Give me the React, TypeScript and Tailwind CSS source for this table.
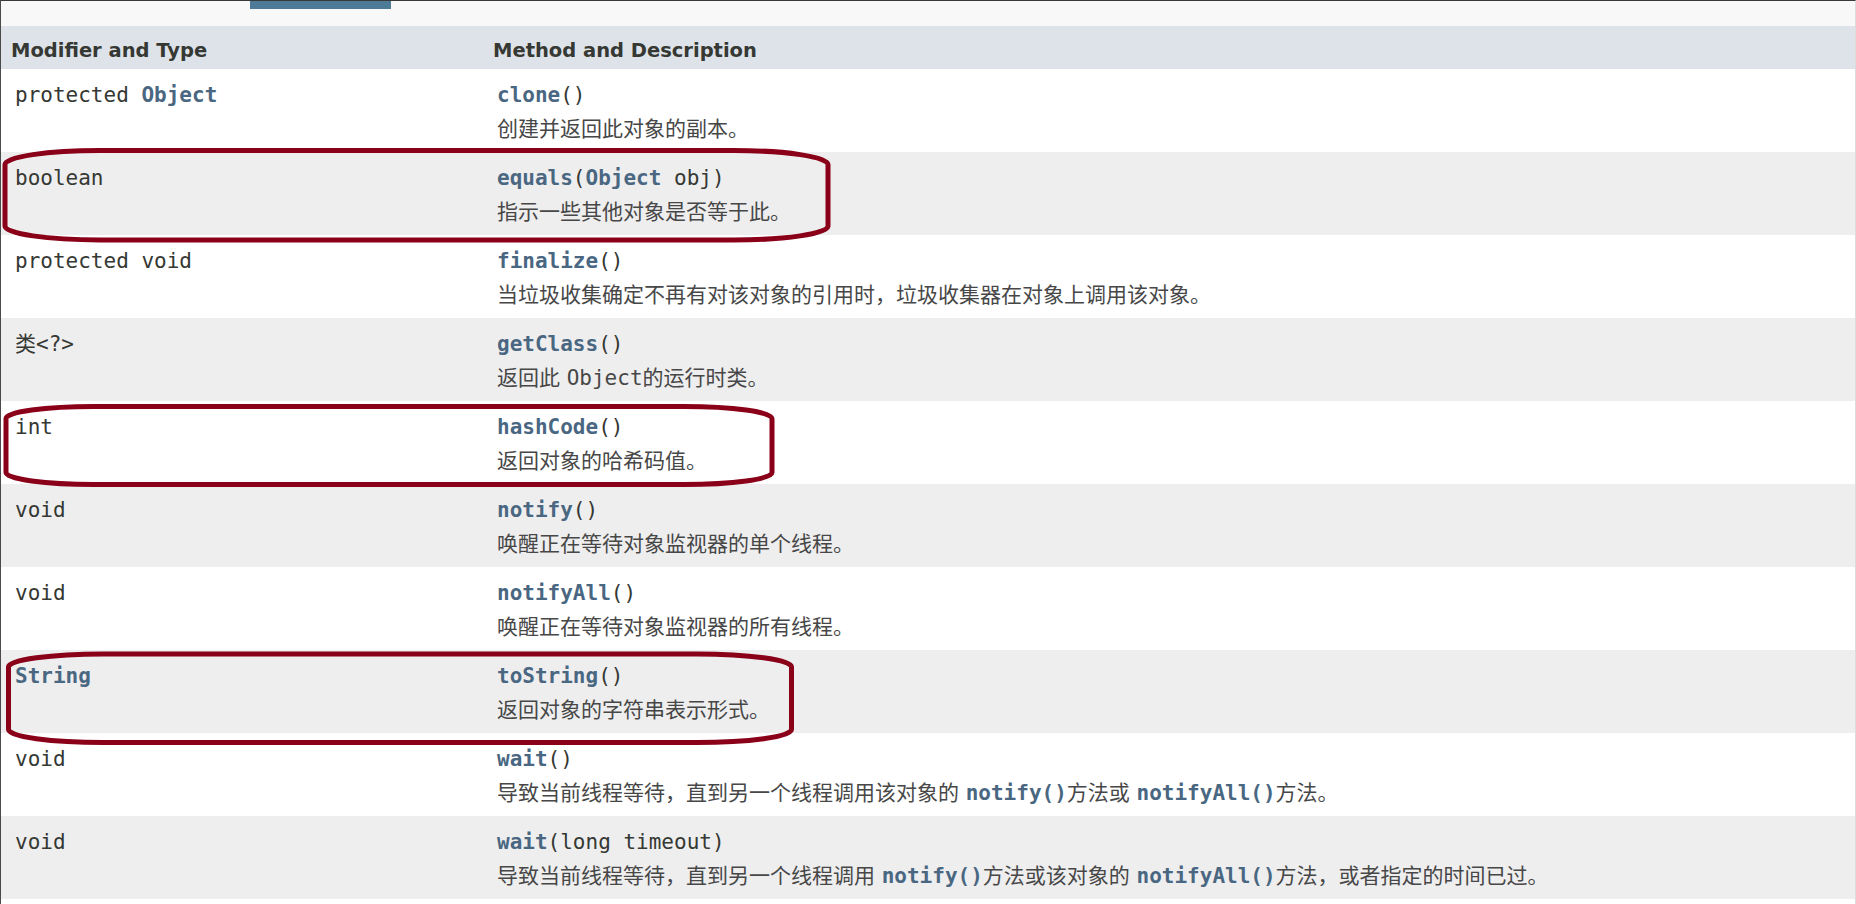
import React from 'react'

const mono = "font-['DejaVu_Sans_Mono','Noto_Sans_CJK_SC',monospace]"
const sans = "font-['DejaVu_Sans','Noto_Sans_CJK_SC',sans-serif]"

function Link({ children }: { children: React.ReactNode }) {
  return <span className="font-bold text-[#4a6782]">{children}</span>
}

type Row = {
  type: React.ReactNode
  name: string
  params: React.ReactNode
  desc: React.ReactNode
}

const rows: Row[] = [
  {
    type: <>protected <Link>Object</Link></>,
    name: 'clone',
    params: '()',
    desc: '创建并返回此对象的副本。',
  },
  {
    type: 'boolean',
    name: 'equals',
    params: <>(<Link>Object</Link> obj)</>,
    desc: '指示一些其他对象是否等于此。',
  },
  {
    type: 'protected void',
    name: 'finalize',
    params: '()',
    desc: '当垃圾收集确定不再有对该对象的引用时，垃圾收集器在对象上调用该对象。',
  },
  {
    type: '类<?>',
    name: 'getClass',
    params: '()',
    desc: <>返回此 <span className={mono}>Object</span>的运行时类。</>,
  },
  {
    type: 'int',
    name: 'hashCode',
    params: '()',
    desc: '返回对象的哈希码值。',
  },
  {
    type: 'void',
    name: 'notify',
    params: '()',
    desc: '唤醒正在等待对象监视器的单个线程。',
  },
  {
    type: 'void',
    name: 'notifyAll',
    params: '()',
    desc: '唤醒正在等待对象监视器的所有线程。',
  },
  {
    type: <Link>String</Link>,
    name: 'toString',
    params: '()',
    desc: '返回对象的字符串表示形式。',
  },
  {
    type: 'void',
    name: 'wait',
    params: '()',
    desc: (
      <>
        导致当前线程等待，直到另一个线程调用该对象的 <span className={mono}><Link>notify()</Link></span>方法或 <span className={mono}><Link>notifyAll()</Link></span>方法。
      </>
    ),
  },
  {
    type: 'void',
    name: 'wait',
    params: '(long timeout)',
    desc: (
      <>
        导致当前线程等待，直到另一个线程调用 <span className={mono}><Link>notify()</Link></span>方法或该对象的 <span className={mono}><Link>notifyAll()</Link></span>方法，或者指定的时间已过。
      </>
    ),
  },
]

export default function App() {
  return (
    <div className="relative w-[1856px] h-[904px] overflow-hidden bg-white">
      <div className="h-full border-l border-t border-r border-l-[#4a4a4a] border-t-[#383838] border-r-[#dcdcdc]">

        {/* tab strip */}
        <div className="h-[25px] bg-[#f8f8f8]">
          <div className="ml-[249px] w-[141px] h-[8px] bg-[#4d7a97]" />
        </div>

        {/* table header — th runs a size smaller than the code cells */}
        <div className={`flex h-[43px] bg-[#dee3e9] text-[19.5px] leading-[24px] font-bold text-[#353833] ${sans}`}>
          <div className="w-[482px] pl-[10px] pt-[13px]">Modifier and Type</div>
          <div className="flex-1 pl-[10px] pt-[13px]">Method and Description</div>
        </div>

        {rows.map((r, i) => (
          <div key={i} className={`flex h-[83px] ${i % 2 ? 'bg-[#eeeeef]' : 'bg-white'}`}>
            <div className={`w-[482px] pl-[14px] pt-[14px] text-[21px] leading-[24px] text-[#353833] ${mono}`}>
              {r.type}
            </div>
            <div className="flex-1 pl-[14px] pt-[14px]">
              <div className={`h-[24px] text-[21px] leading-[24px] text-[#353833] whitespace-pre ${mono}`}>
                <Link>{r.name}</Link>{r.params}
              </div>
              <div className={`mt-[10px] h-[24px] text-[21px] leading-[24px] text-[#474747] whitespace-nowrap ${sans}`}>
                {r.desc}
              </div>
            </div>
          </div>
        ))}
      </div>

      {/* hand-drawn highlight marks */}
      <svg className="absolute inset-0 pointer-events-none" width="1856" height="904" viewBox="0 0 1856 904">
        <g fill="none" stroke="#8a0019" strokeWidth="5">
          <rect x="5" y="150.5" width="823" height="89.5" rx="95" ry="14" />
          <rect x="6" y="406.5" width="766" height="78" rx="88" ry="12" />
          <rect x="8.5" y="654" width="783" height="88.5" rx="95" ry="13" />
        </g>
      </svg>
    </div>
  )
}
